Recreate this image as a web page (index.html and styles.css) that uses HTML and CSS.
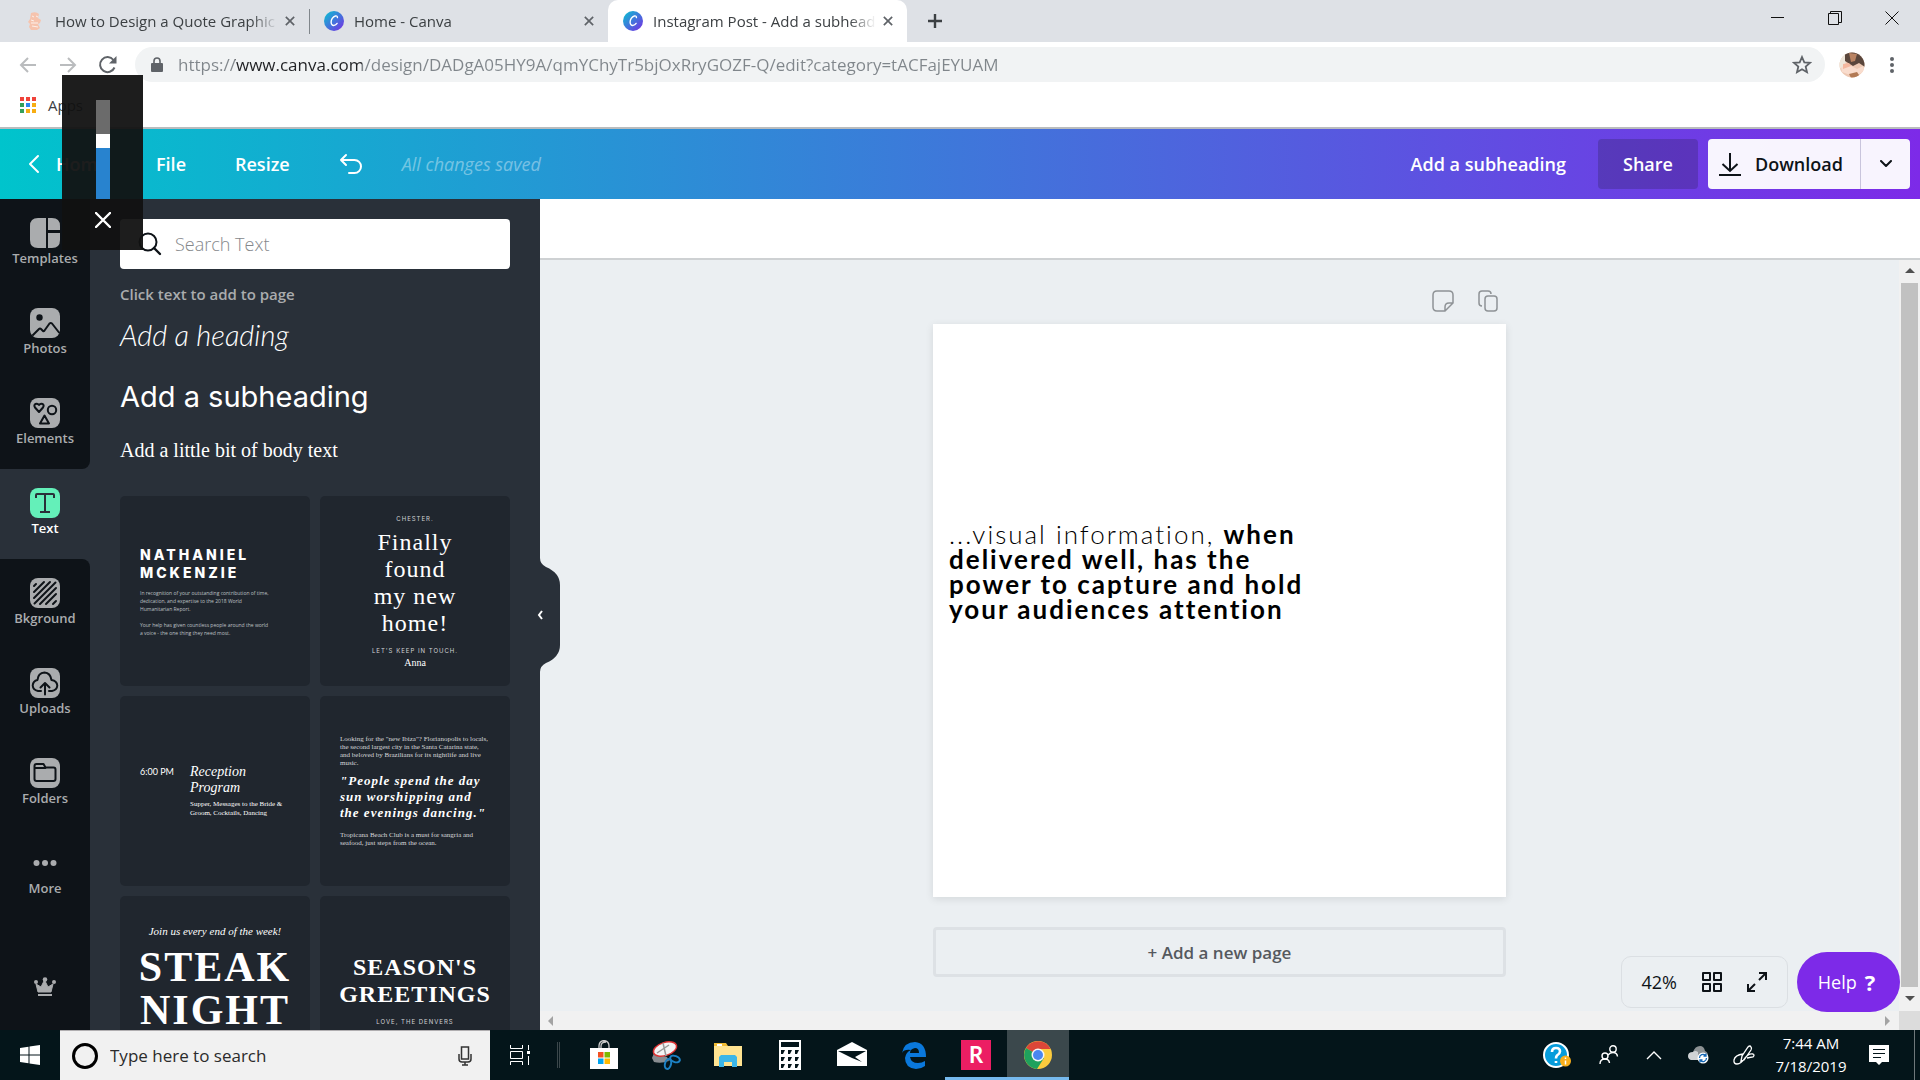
FILE: index.html
```html
<!DOCTYPE html>
<html lang="en">
<head>
    <meta charset="UTF-8">
    <meta name="viewport" content="width=device-width, initial-scale=1.0">
    <title>Instagram Post - Add a subheading</title>
    <link rel="stylesheet" href="styles.css">
</head>
<body>
    <!-- shared gradients -->
    <svg class="defs" width="0" height="0" aria-hidden="true">
        <defs>
            <linearGradient id="canvaGradient" x1="0" y1="0" x2="1" y2="1">
                <stop offset="0.1" stop-color="#12b5d3"/>
                <stop offset="0.95" stop-color="#7431e4"/>
            </linearGradient>
        </defs>
    </svg>

    <!-- Browser -->
    <div class="tabs">
        <div class="tab">
            <svg class="favicon" viewBox="0 0 20 20"><path d="M6 2q5-2 8 1l-1 4 3 2-1 3-2 1 2 4-3 2H6l-2-3 1-3-2-2 2-3z" fill="#f6c3ad"/><path d="M7 5l2 1M11 5l2 1M6 12h7M7 15l6 1M6 9l3 1" stroke="#fdf0ea" stroke-width="1"/></svg>
            <span class="tab-title">How to Design a Quote Graphic f</span>
            <button class="tab-close" aria-label="Close tab"><svg viewBox="0 0 12 12"><path d="M1 1l10 10M11 1L1 11"/></svg></button>
        </div>
        <div class="tab tab-separated">
            <svg class="favicon" viewBox="0 0 20 20"><circle cx="10" cy="10" r="10" fill="url(#canvaGradient)"/><path d="M13.4 6.6c.3-1.300-.7-1.900-2-1.600-2.600.6-4.400 3.600-4.300 6.300.1 2.200 1.300 3.400 3 3.100 1.300-.2 2.300-1 3-2" fill="none" stroke="#fff" stroke-width="1.400" stroke-linecap="round"/></svg>
            <span class="tab-title">Home - Canva</span>
            <button class="tab-close" aria-label="Close tab"><svg viewBox="0 0 12 12"><path d="M1 1l10 10M11 1L1 11"/></svg></button>
        </div>
        <div class="tab tab-active">
            <svg class="favicon" viewBox="0 0 20 20"><circle cx="10" cy="10" r="10" fill="url(#canvaGradient)"/><path d="M13.4 6.6c.3-1.300-.7-1.900-2-1.600-2.600.6-4.400 3.600-4.300 6.300.1 2.200 1.300 3.400 3 3.100 1.300-.2 2.300-1 3-2" fill="none" stroke="#fff" stroke-width="1.400" stroke-linecap="round"/></svg>
            <span class="tab-title">Instagram Post - Add a subheadin</span>
            <button class="tab-close" aria-label="Close tab"><svg viewBox="0 0 12 12"><path d="M1 1l10 10M11 1L1 11"/></svg></button>
        </div>
        <button class="new-tab" aria-label="New tab"><svg width="16" height="16" viewBox="0 0 16 16"><path d="M8 1v14M1 8h14" stroke="#3c4043" stroke-width="2.400"/></svg></button>
        <div class="window-buttons">
            <button aria-label="Minimize"><svg width="14" height="14" viewBox="0 0 14 14"><path d="M0 6.500h13"/></svg></button>
            <button aria-label="Restore"><svg width="14" height="14" viewBox="0 0 14 14"><path d="M.5 2.500h10v11H.5zM2.500 2.500v-2h11v11h-3"/></svg></button>
            <button aria-label="Close"><svg width="14" height="14" viewBox="0 0 14 14"><path d="M.5.5l13 13M13.500.5l-13 13"/></svg></button>
        </div>
    </div>

    <div class="address-row">
        <button class="nav-button" aria-label="Back"><svg viewBox="0 0 20 20"><path d="M18 10H3M10 3l-7 7 7 7" stroke="#babcbe"/></svg></button>
        <button class="nav-button" aria-label="Forward"><svg viewBox="0 0 20 20"><path d="M2 10h15M10 3l7 7-7 7" stroke="#babcbe"/></svg></button>
        <button class="nav-button" aria-label="Reload"><svg viewBox="0 0 20 20"><path d="M16.500 12.500A7.500 7.500 0 1 1 15.500 5" stroke="#5f6368"/><path d="M18.500 1v7.500H11z" fill="#5f6368"/></svg></button>
        <div class="address">
            <svg width="12" height="16" viewBox="0 0 12 16"><path d="M1 6h10q1 0 1 1v7q0 1-1 1H1q-1 0-1-1V7q0-1 1-1z" fill="#5f6368"/><path d="M3 6V4a3 3 0 0 1 6 0v2" fill="none" stroke="#5f6368" stroke-width="1.600"/></svg>
            <input class="url" type="text" aria-label="Address" value="https://www.canva.com/design/DADgA05HY9A/qmYChyTr5bjOxRryGOZF-Q/edit?category=tACFajEYUAM">
            <button aria-label="Bookmark this page"><svg width="20" height="20" viewBox="0 0 20 20"><path d="M10 2l2.300 5.300 5.700.5-4.300 3.800 1.300 5.600-5-3-5 3 1.300-5.600L2 7.800l5.700-.5z" fill="none" stroke="#5f6368" stroke-width="1.800"/></svg></button>
        </div>
        <button class="profile" aria-label="Profile"><svg width="26" height="26" viewBox="0 0 26 26"><clipPath id="face"><circle cx="13" cy="13" r="12.500"/></clipPath><g clip-path="url(#face)"><path d="M0 0h26v26H0z" fill="#eec9b4"/><path d="M0 0h9l-3 14-6 3z" fill="#eee6da"/><path d="M6 0h20v15l-6-4-6 3-8-5z" fill="#5a463c"/><path d="M10 1l8 1-2 7-4 1z" fill="#b98363"/><path d="M2 15l8-2 8 4 6-3 2 6-12 4-11-4z" fill="#f9dccd"/><path d="M10 22l8-2 4 6H12z" fill="#b27a55"/><path d="M4 12l6-1 2 3-8 3z" fill="#f4b79e"/></g></svg></button>
        <button class="menu-dots" aria-label="Menu"><svg width="6" height="18" viewBox="0 0 6 18"><g fill="#5f6368"><circle cx="3" cy="3" r="2"/><circle cx="3" cy="9" r="2"/><circle cx="3" cy="15" r="2"/></g></svg></button>
    </div>

    <div class="bookmarks">
        <a href="#" class="apps-link">
            <svg width="16" height="16" viewBox="0 0 16 16"><path d="M0 0h4v4H0zM6 0h4v4H6zM12 0h4v4h-4z" fill="#f0433a"/><path d="M0 6h4v4H0zM0 12h4v4H0z" fill="#34a05a"/><path d="M6 6h4v4H6z" fill="#2d86f0"/><path d="M12 6h4v4h-4zM6 12h4v4H6zM12 12h4v4h-4z" fill="#f7ad12"/></svg>
            Apps
        </a>
    </div>

    <!-- Editor header -->
    <header class="header">
        <a href="#" class="home-link">
            <svg width="12" height="20" viewBox="0 0 12 20"><path d="M10 2l-8 8 8 8" fill="none" stroke="#fff" stroke-width="2" stroke-linecap="round" stroke-linejoin="round"/></svg>
            Home
        </a>
        <button class="header-button">File</button>
        <button class="header-button">Resize</button>
        <button class="undo" aria-label="Undo"><svg width="24" height="22" viewBox="0 0 24 22"><path d="M7 2L2 7l5 5M2 7h13.500a6.500 6.500 0 0 1 0 13H10" fill="none" stroke="#fff" stroke-width="2" stroke-linecap="round" stroke-linejoin="round"/></svg></button>
        <span class="saved">All changes saved</span>
        <button class="header-button design-title">Add a subheading</button>
        <button class="share">Share</button>
        <div class="download-group">
            <button class="download">
                <svg width="22" height="24" viewBox="0 0 22 24"><path d="M11 1v18M3.500 12l7.500 7 7.500-7M0 23h22" fill="none" stroke="#0e1318" stroke-width="2"/></svg>
                Download
            </button>
            <button class="download-more" aria-label="Download options"><svg width="12" height="8" viewBox="0 0 12 8"><path d="M1 1l5 5 5-5" fill="none" stroke="#0e1318" stroke-width="2" stroke-linecap="round" stroke-linejoin="round"/></svg></button>
        </div>
    </header>

    <main class="editor">
        <nav class="rail">
            <div class="rail-group rail-top">
                <button class="rail-item"><svg viewBox="0 0 30 30"><path d="M16 0h-8Q0 0 0 8v14q0 8 8 8h8zM18 0h4q8 0 8 8v4H18zM18 15h12v7q0 8-8 8h-4z"/></svg>Templates</button>
                <button class="rail-item"><svg viewBox="0 0 30 30"><rect width="30" height="30" rx="8"/><circle cx="9.500" cy="9.500" r="3.200" class="ink-fill"/><path class="ink" d="M3 27l6-6q1-1 2 0l2 2q1 .5 1.500-.5l5-7q1.200-1 2.500 0l7 9"/></svg>Photos</button>
                <button class="rail-item"><svg viewBox="0 0 30 30"><rect width="30" height="30" rx="8"/><path class="ink" d="M9 14L5 9.500Q3.500 7 5.500 6q2-1 3.500 1 1.500-2 3.500-1 2 1 .5 3.500zM14.500 17.500L19 25.500H10z"/><circle class="ink" cx="22" cy="12" r="4.200"/></svg>Elements</button>
            </div>
            <div class="rail-active">
                <button class="rail-item selected"><svg viewBox="0 0 30 30"><rect width="30" height="30" rx="8"/><path d="M6 10V7q0-1 1-1h16q1 0 1 1v3M15 6v18M10 24h10" fill="none" stroke="#2a3039" stroke-width="2"/></svg>Text</button>
            </div>
            <div class="rail-group rail-bottom">
                <button class="rail-item"><svg viewBox="0 0 30 30"><rect width="30" height="30" rx="8"/><path class="ink" d="M4 8l2-2M4 14L14 4M4 20L20 4M4.500 25.500l21-21M10 26L26 10M16 26l10-10M23 26l3-3"/></svg>Bkground</button>
                <button class="rail-item"><svg viewBox="0 0 30 30"><rect width="30" height="30" rx="8"/><path class="ink" d="M11 23H8q-5-1-5.300-5.500Q3 13 7.500 12q.5-7 7-7.500 6 .5 7 7.500 5.500 1 5.800 5.500Q27 22 22 23h-3M15 26.500V16M10.500 19.500L15 15l4.500 4.500"/></svg>Uploads</button>
                <button class="rail-item"><svg viewBox="0 0 30 30"><rect width="30" height="30" rx="8"/><path class="ink" d="M4.500 21V8q0-2 2-2h7l2 3.500h8q2 0 2 2V21q0 2-2 2h-17q-2 0-2-2zM4.500 10h11"/></svg>Folders</button>
                <button class="rail-item"><svg viewBox="0 0 30 30"><circle cx="6.500" cy="15" r="3"/><circle cx="15" cy="15" r="3"/><circle cx="23.500" cy="15" r="3"/></svg>More</button>
                <button class="crown" aria-label="Canva Pro"><svg width="22" height="20" viewBox="0 0 22 20"><path d="M4 15L2 7l5 3 3.500-7L14 10l5-3-2 8z" stroke="#aaacae" stroke-width="1" stroke-linejoin="round"/><circle cx="2" cy="5" r="2"/><circle cx="11" cy="2.500" r="2.300"/><circle cx="20" cy="5" r="2"/><path d="M4 17h14v2H4z"/></svg></button>
            </div>
        </nav>

        <section class="panel">
            <div class="panel-content">
                <label class="search">
                    <svg width="24" height="24" viewBox="0 0 24 24"><circle cx="10" cy="10" r="8.500" fill="none" stroke="#0e1318" stroke-width="2"/><path d="M16 16l6 6" stroke="#0e1318" stroke-width="2.400" stroke-linecap="round"/></svg>
                    <input type="search" placeholder="Search Text" aria-label="Search Text">
                </label>
                <h2 class="hint">Click text to add to page</h2>
                <button class="add-heading">Add a heading</button>
                <button class="add-subheading">Add a subheading</button>
                <button class="add-body">Add a little bit of body text</button>

                <div class="cards">
                    <button class="card name-card">
                        <span class="name">NATHANIEL<br>MCKENZIE</span>
                        <span class="tiny">In recognition of your outstanding contribution of time,<br>dedication, and expertise to the 2018 World<br>Humanitarian Report.<br><br>Your help has given countless people around the world<br>a voice - the one thing they need most.</span>
                    </button>
                    <button class="card home-card">
                        <span class="caps">CHESTER.</span>
                        <span class="slab">Finally<br>found<br>my new<br>home!</span>
                        <span class="caps">LET'S KEEP IN TOUCH.</span>
                        <span class="sign">Anna</span>
                    </button>
                    <button class="card program-card">
                        <span class="time">6:00 PM</span>
                        <span class="program">
                            <span class="program-title">Reception Program</span>
                            <span class="program-text">Supper, Messages to the Bride &amp; Groom, Cocktails, Dancing</span>
                        </span>
                    </button>
                    <button class="card quote-card">
                        <span class="story">Looking for the "new Ibiza"? Florianopolis to locals,<br>the second largest city in the Santa Catarina state,<br>and beloved by Brazilians for its nightlife and live<br>music.</span>
                        <span class="quote">"People spend the day<br>sun worshipping and<br>the evenings dancing."</span>
                        <span class="story">Tropicana Beach Club is a must for sangria and<br>seafood, just steps from the ocean.</span>
                    </button>
                    <button class="card steak-card">
                        <span class="invite">Join us every end of the week!</span>
                        <span class="steak">STEAK<br>NIGHT</span>
                    </button>
                    <button class="card season-card">
                        <span class="season">SEASON'S<br>GREETINGS</span>
                        <span class="caps">LOVE, THE DENVERS</span>
                    </button>
                </div>
            </div>
            <button class="collapse" aria-label="Hide panel">
                <svg width="30" height="114" viewBox="0 0 30 114"><path d="M0 0h10q0 6 6 9 14 6 14 18v60q0 12-14 18-6 3-6 9H0z" fill="#293039"/><path d="M12 53l-3 4 3 4" fill="none" stroke="#fff" stroke-width="2"/></svg>
            </button>
        </section>

        <section class="workspace">
            <div class="context-bar"></div>
            <div class="scroll-area">
                <div class="stage">
                    <div class="page-column">
                        <div class="page-tools">
                            <button aria-label="Add note"><svg width="22" height="22" viewBox="0 0 22 22"><path d="M5 1h12q4 0 4 4v8l-8 8H5q-4 0-4-4V5q0-4 4-4zM13 21v-4q0-4 4-4h4"/></svg></button>
                            <button aria-label="Copy page"><svg width="20" height="22" viewBox="0 0 20 22"><path d="M4 16q-3 0-3-3V4q0-3 3-3h6q3 0 3 3"/><rect x="7" y="6" width="12" height="15" rx="3"/></svg></button>
                        </div>
                        <div class="design">
                            <p class="design-text">...visual information, <b>when<br>delivered well, has the<br>power to capture and hold<br>your audiences attention</b></p>
                        </div>
                        <button class="add-page">+ Add a new page</button>
                    </div>
                    <div class="floating">
                        <div class="zoom-box">
                            <button>42%</button>
                            <button aria-label="Grid view"><svg width="20" height="20" viewBox="0 0 20 20"><path d="M1 1h7v7H1zM12 1h7v7h-7zM1 12h7v7H1zM12 12h7v7h-7z" fill="none" stroke="#0e1318" stroke-width="2" stroke-linejoin="round"/></svg></button>
                            <button aria-label="Full screen"><svg width="20" height="20" viewBox="0 0 20 20"><path d="M12 1h7v7M19 1l-7 7M8 19H1v-7M1 19l7-7" fill="none" stroke="#0e1318" stroke-width="2"/></svg></button>
                        </div>
                        <button class="help">Help <b>?</b></button>
                    </div>
                </div>
                <div class="scroll-y">
                    <svg width="10" height="6" viewBox="0 0 10 6"><path d="M0 5l5-5 5 5z" fill="#505050"/></svg>
                    <div class="scroll-thumb"></div>
                    <svg width="10" height="6" viewBox="0 0 10 6"><path d="M0 0l5 5 5-5z" fill="#505050"/></svg>
                </div>
                <div class="scroll-x">
                    <svg width="6" height="10" viewBox="0 0 6 10"><path d="M5 0L0 5l5 5z" fill="#a3a3a3"/></svg>
                    <svg width="6" height="10" viewBox="0 0 6 10"><path d="M0 0l5 5-5 5z" fill="#a3a3a3"/></svg>
                </div>
                <div class="scroll-corner"></div>
            </div>
        </section>
    </main>

    <!-- Taskbar -->
    <footer class="taskbar">
        <button class="start" aria-label="Start"><svg width="20" height="20" viewBox="0 0 20 20"><path d="M0 3l8.500-1.200v7.700H0zM9.500 1.600L20 0v9.500H9.500zM0 10.500h8.500v7.700L0 17zM9.500 10.500H20V20L9.500 18.400z" fill="#fff"/></svg></button>
        <label class="task-search">
            <svg width="28" height="28" viewBox="0 0 28 28"><circle cx="14" cy="14" r="11.500" fill="none" stroke="#000" stroke-width="3"/></svg>
            <input type="text" placeholder="Type here to search" aria-label="Type here to search">
            <svg width="14" height="20" viewBox="0 0 14 20" fill="none" stroke="#333" stroke-width="1.500"><rect x="3.500" y="1" width="7" height="12"/><path d="M1 8v5q0 3 3 3h6q3 0 3-3V8M7 16v3M4 19h6"/></svg>
        </label>
        <button class="task-view" aria-label="Task view"><svg width="21" height="20" viewBox="0 0 21 20" fill="none" stroke="#fff"><path d="M.5 0v3.500h12V0M.5 20v-3.500h12V20M.5 6.500h12v7H.5zM18.500 0v5M18.500 11v9"/><path d="M17 6h3v3h-3z" fill="#fff" stroke="none"/></svg></button>
        <div class="task-separator"></div>
        <div class="task-apps">
            <button aria-label="Store"><svg viewBox="0 0 30 30"><path d="M10 11V6q0-5 5-5.500Q20 1 20 6v5M12 11V6q0-4 5-4" fill="none" stroke="#ccc" stroke-width="1.300"/><path d="M1 8h28v21H1z" fill="#fff"/><path d="M9 12h5.500v5.500H9z" fill="#f25022"/><path d="M15.500 12H21v5.500h-5.500z" fill="#7fba00"/><path d="M9 18.500h5.500V24H9z" fill="#00a4ef"/><path d="M15.500 18.500H21V24h-5.500z" fill="#ffb900"/></svg></button>
            <button aria-label="Snipping Tool"><svg viewBox="0 0 30 30"><path d="M1 18l2-5 13 4 2 4q-8 3-15 1z" fill="#888c90"/><ellipse cx="14" cy="9" rx="12" ry="6.500" transform="rotate(-18 14 9)" fill="#f4f4f4" stroke="#d33" stroke-width="1.400"/><path d="M12 3l3 13M6 13l12-8" stroke="#9a9a9a" stroke-width="1.500"/><ellipse cx="17" cy="24" rx="3" ry="5" transform="rotate(15 17 24)" fill="none" stroke="#1c81c4" stroke-width="2"/><ellipse cx="24" cy="19" rx="5" ry="3" transform="rotate(20 24 19)" fill="none" stroke="#1c81c4" stroke-width="2"/></svg></button>
            <button aria-label="File Explorer"><svg viewBox="0 0 30 30"><path d="M1 3h12l2 3H1z" fill="#f0bb35"/><path d="M1 6h28v20H1z" fill="#ffe391"/><path d="M4 4h5v2H4z" fill="#fff"/><path d="M6 27V17l2-2h14l2 2v10h-5v-5h-8v5z" fill="#3cb6e8"/></svg></button>
            <button aria-label="Calculator"><svg viewBox="0 0 30 30"><path d="M4 0h22v30H4zM6 2v5h18V2z" fill="#fff" fill-rule="evenodd"/><path d="M6 10h4l-2 4H6zM13 10h4l-2 4h-2zM20 10h4l-2 4h-2zM6 17h4l-2 4H6zM13 17h4l-2 4h-2zM20 17h4l-2 4h-2zM6 24h4l-2 4H6zM13 24h4l-2 4h-2zM20 24h4l-2 4h-2z" fill="#04151a"/></svg></button>
            <button aria-label="Mail"><svg viewBox="0 0 30 30"><path d="M0 10L15 2l15 8v16H0z" fill="#fff"/><path d="M1 11h28l-11 6 7 5-10-4z" fill="#04151a"/></svg></button>
            <button aria-label="Edge"><svg viewBox="0 0 30 30"><path d="M3 13Q5 2 16 2q11 1 11 15H11q1 6 8 6 4 0 7-2v5q-4 3-9 3Q6 28 6 18q1-6 6-8-7-1-9 3zM11 13h9q0-5-4-5-5 1-5 5z" fill="#0a78dc"/></svg></button>
            <button class="running" aria-label="R"><span class="r-logo">R</span></button>
            <button class="running current" aria-label="Chrome"><svg viewBox="0 0 30 30"><circle cx="15" cy="15" r="14" fill="#fbcb3e"/><path d="M15 15L3 8A14 14 0 0 1 27.500 9H15z" fill="#dc4638"/><path d="M3 8A14 14 0 0 0 14 29l7-11-6-3z" fill="#1fa15d"/><circle cx="15" cy="15" r="6.500" fill="#f5f5f5"/><circle cx="15" cy="15" r="5" fill="#4a86f0"/></svg></button>
        </div>
        <div class="tray">
            <button aria-label="Help"><svg width="30" height="28" viewBox="0 0 30 28"><circle cx="14" cy="14" r="12" fill="#079cdb" stroke="#fff" stroke-width="2"/><path d="M10 11q0-4 4-4 4 0 4 3.500 0 2-3 4-1 1-1 3M14 20v2" fill="none" stroke="#fff" stroke-width="2.600"/><circle cx="23.500" cy="20" r="5.500" fill="#f9ae1a"/><path d="M23.500 16.500v1.500M23.500 19.500v4" stroke="#fff" stroke-width="1.500"/></svg></button>
            <button aria-label="People"><svg width="20" height="20" viewBox="0 0 20 20" fill="none" stroke="#fff" stroke-width="1.400"><circle cx="6" cy="11" r="3"/><circle cx="14" cy="4" r="3.200"/><path d="M1 19q0-5 5-5 4 0 4.500 4M9 10q2-2.500 5-2.500 4 0 4.500 4"/></svg></button>
            <button aria-label="Show hidden icons"><svg width="16" height="10" viewBox="0 0 16 10"><path d="M1 9l7-7 7 7" fill="none" stroke="#fff" stroke-width="1.400"/></svg></button>
            <button aria-label="OneDrive"><svg width="22" height="18" viewBox="0 0 22 18"><path d="M5 6q2-6 7-6 4 0 5 5 3 1 3 5H3z" fill="#8d9294"/><path d="M3 14Q0 13 0 10q0-4 5-4 2-2 5 0v8z" fill="#d0d3d5"/><circle cx="15" cy="12" r="5.500" fill="#fff"/><path d="M11.500 12a3.500 3.500 0 0 1 6-2.500M18.500 12a3.500 3.500 0 0 1-6 2.500M18 7.500v2.500h-2.500M12 16.500V14h2.500" fill="none" stroke="#1668b5" stroke-width="1.300"/></svg></button>
            <button aria-label="Windows Ink"><svg width="22" height="20" viewBox="0 0 22 20" fill="none" stroke="#fff" stroke-width="1.300"><path d="M8 16l1-5 6-9q2-2 3 0 1 1 0 3l-7 10zM10 9q-8 1-9 6-.5 4 3 4 4 0 8-6 4-5 8-4 2 1 0 3l-6 1"/></svg></button>
            <div class="clock"><span>7:44 AM</span><span>7/18/2019</span></div>
            <button aria-label="Notifications"><svg width="20" height="20" viewBox="0 0 20 20"><path d="M0 0h20v17h-7l-3 3-3-3H0z" fill="#fff"/><path d="M4 4.500h12M4 8.500h12M4 12.500h8" stroke="#04151a" stroke-width="1.200"/></svg></button>
        </div>
        <button class="show-desktop" aria-label="Show desktop"></button>
    </footer>

    <!-- volume flyout, floats over everything -->
    <div class="volume">
        <div class="volume-track"><div class="volume-thumb"></div><div class="volume-level"></div></div>
        <button aria-label="Mute"><svg width="16" height="16" viewBox="0 0 16 16"><path d="M1 1l14 14M15 1L1 15" stroke="#fff" stroke-width="2.400" stroke-linecap="round"/></svg></button>
    </div>
</body>
</html>
```
FILE: styles.css
```css
* {
    box-sizing: border-box;
}
body {
    position: relative;
    display: flex;
    flex-direction: column;
    height: 100vh;
    margin: 0;
    overflow: hidden;
    font-family: "Open Sans", sans-serif;
    background-color: #fff;
}
button, input {
    font-family: inherit;
    border: 0;
    margin: 0;
    padding: 0;
    background: none;
    outline: none;
}
button {
    display: flex;
    align-items: center;
    justify-content: center;
}
a {
    text-decoration: none;
}
svg {
    display: block;
    flex: none;
}
.defs {
    position: absolute;
}

/* browser tabs */
.tabs {
    display: flex;
    flex: none;
    height: 42px;
    background-color: #dee1e6;
}
.tab {
    display: flex;
    align-items: center;
    width: 299px;
    padding: 0 7px 0 15px;
    color: #3c4043;
    font-size: 15px;
}
.tab:first-child {
    width: 309px;
    padding-left: 25px;
}
.tab-separated {
    background: linear-gradient(#80868b, #80868b) 0 9px / 1px 25px no-repeat;
}
.tab-active {
    background-color: #fff;
    border-radius: 10px 10px 0 0;
}
.favicon {
    width: 20px;
    height: 20px;
    margin-right: 10px;
}
.tab-title {
    flex: 1;
    min-width: 0;
    overflow: hidden;
    white-space: nowrap;
    -webkit-mask-image: linear-gradient(90deg, #000 88%, transparent);
    mask-image: linear-gradient(90deg, #000 88%, transparent);
}
.tab-close {
    width: 24px;
    height: 24px;
}
.tab-close svg {
    width: 10px;
    height: 10px;
    stroke: #5f6368;
    stroke-width: 2;
}
.new-tab {
    width: 56px;
}
.window-buttons {
    display: flex;
    margin-left: auto;
}
.window-buttons button {
    width: 57px;
    height: 36px;
}
.window-buttons svg {
    fill: none;
    stroke: #111;
}

/* address bar */
.address-row {
    display: flex;
    align-items: center;
    flex: none;
    height: 45px;
    padding: 0 20px 0 8px;
}
.nav-button {
    width: 40px;
}
.nav-button svg {
    width: 20px;
    height: 20px;
    fill: none;
    stroke-width: 2;
}
.address {
    display: flex;
    align-items: center;
    flex: 1;
    height: 35px;
    margin: 0 14px 0 7px;
    padding: 0 13px 0 16px;
    border-radius: 18px;
    background-color: #f1f3f4;
}
.url {
    flex: 1;
    height: 30px;
    margin-left: 15px;
    font-size: 17px;
    color: transparent;
    /* host part of the address is darker than the rest */
    background: linear-gradient(90deg, #80868b 57px, #202124 57px 184px, #80868b 184px);
    -webkit-background-clip: text;
    background-clip: text;
}
.menu-dots {
    width: 16px;
    margin-left: 19px;
}
.bookmarks {
    flex: none;
    height: 42px;
    padding: 7px 20px;
    border-bottom: 2px solid #b9bcbe;
}
.apps-link {
    display: flex;
    align-items: center;
    gap: 12px;
    color: #3c4043;
    font-size: 15px;
    line-height: 22px;
}

/* editor header */
.header {
    display: flex;
    align-items: center;
    flex: none;
    height: 70px;
    padding: 0 10px 0 28px;
    background: linear-gradient(90deg, #00c4cc, #7d2ae8);
    color: #fff;
    font-size: 18px;
    font-weight: 600;
}
.header button {
    font-size: 18px;
    font-weight: 600;
}
.home-link {
    display: flex;
    align-items: center;
    gap: 16px;
    width: 128px;
    color: #fff;
}
.header-button {
    margin-right: 49px;
    color: #fff;
}
.undo {
    margin-right: 39px;
}
.saved {
    color: rgba(255, 255, 255, 0.4);
    font-weight: 400;
    font-style: italic;
}
.design-title {
    margin: 0 32px 0 auto;
}
.share {
    width: 100px;
    height: 50px;
    border-radius: 4px;
    background-color: rgba(14, 19, 24, 0.2);
    color: #fff;
}
.download-group {
    display: flex;
    width: 202px;
    height: 50px;
    margin-left: 10px;
    border-radius: 4px;
    background-color: rgba(255, 255, 255, 0.95);
}
.download {
    flex: 1;
    gap: 14px;
    padding-right: 6px;
    color: #0e1318;
}
.download-more {
    width: 50px;
    border-left: 1px solid #c9c4dc;
}

/* left rail */
.editor {
    display: flex;
    flex: 1;
    min-height: 0;
}
.rail {
    display: flex;
    flex-direction: column;
    width: 90px;
    background-color: #293039;
}
.rail-group {
    background-color: #0e1318;
}
.rail-top {
    border-bottom-right-radius: 8px;
}
.rail-bottom {
    display: flex;
    flex-direction: column;
    flex: 1;
    min-height: 0;
    border-top-right-radius: 8px;
}
.rail-item {
    flex-direction: column;
    justify-content: flex-start;
    flex: none;
    width: 90px;
    height: 90px;
    padding-top: 19px;
    color: #aaacae;
    font-size: 13px;
    font-weight: 600;
    line-height: 20px;
}
.rail-item svg {
    width: 30px;
    height: 30px;
    fill: #aaacae;
}
.rail-item .ink {
    fill: none;
    stroke: #0e1318;
    stroke-width: 2;
    stroke-linecap: round;
    stroke-linejoin: round;
}
.rail-item .ink-fill {
    fill: #0e1318;
}
.selected {
    color: #fff;
}
.selected svg {
    fill: #64f0b9;
}
.crown {
    margin: auto auto 33px;
    fill: #aaacae;
}

/* text panel */
.panel {
    position: relative;
    flex: none;
    width: 450px;
    background-color: #293039;
}
.panel-content {
    height: 100%;
    padding: 20px 30px 0;
    overflow: hidden;
}
.search {
    display: flex;
    align-items: center;
    gap: 13px;
    height: 50px;
    padding: 0 18px;
    border-radius: 4px;
    background-color: #fff;
}
.search input {
    flex: 1;
    min-width: 0;
    font-size: 18px;
    font-weight: 300;
}
.search input::placeholder {
    color: #85888b;
}
.hint {
    margin: 13px 0 0;
    color: #aaacae;
    font-size: 15px;
    font-weight: 600;
    line-height: 24px;
}
.add-heading {
    height: 56px;
    color: #fff;
    font-family: Lato, sans-serif;
    font-size: 29px;
    font-style: italic;
    font-weight: 300;
}
.add-subheading {
    height: 68px;
    color: #fff;
    font-family: Inter, sans-serif;
    font-size: 29px;
    font-weight: 400;
}
.add-body {
    height: 40px;
    margin-bottom: 26px;
    color: #fff;
    font-family: "Liberation Serif", serif;
    font-size: 20px;
}
.cards {
    display: grid;
    grid-template-columns: repeat(2, minmax(0, 1fr));
    gap: 10px;
}
.card {
    flex-direction: column;
    height: 190px;
    padding: 0 20px;
    border-radius: 5px;
    background-color: #20262e;
    color: #fff;
}
.name-card {
    align-items: flex-start;
    text-align: left;
    white-space: nowrap;
}
.name {
    margin-bottom: 7px;
    font-family: Inter, sans-serif;
    font-size: 14px;
    font-weight: 800;
    letter-spacing: 3px;
    line-height: 18px;
}
.tiny {
    color: #bfc1c4;
    font-size: 5px;
    line-height: 8px;
}
.caps {
    color: #d0d2d4;
    font-family: Inter, sans-serif;
    font-size: 6px;
    letter-spacing: 1px;
    line-height: 12px;
}
.slab {
    margin: 4px 0 8px;
    font-family: "Liberation Serif", serif;
    font-size: 24px;
    letter-spacing: 1px;
    line-height: 27px;
}
.sign {
    font-family: "Liberation Serif", serif;
    font-size: 10px;
    line-height: 12px;
}
.program-card {
    flex-direction: row;
    align-items: flex-start;
    justify-content: flex-start;
    padding-top: 68px;
    text-align: left;
}
.time {
    width: 50px;
    font-family: Lato, sans-serif;
    font-size: 9px;
    line-height: 16px;
}
.program {
    flex: 1;
    font-family: "Liberation Serif", serif;
}
.program-title {
    display: block;
    width: 80px;
    font-size: 14px;
    font-style: italic;
    line-height: 16px;
}
.program-text {
    display: block;
    margin-top: 4px;
    font-size: 7px;
    line-height: 9px;
}
.quote-card {
    align-items: flex-start;
    font-family: "Liberation Serif", serif;
    text-align: left;
    white-space: nowrap;
}
.story {
    color: #d8d9db;
    font-size: 7px;
    line-height: 8px;
}
.quote {
    margin: 6px 0 10px;
    font-size: 13px;
    font-style: italic;
    font-weight: 700;
    letter-spacing: 1px;
    line-height: 16px;
}
.steak-card {
    justify-content: flex-start;
    padding-top: 28px;
    font-family: "Liberation Serif", serif;
}
.invite {
    font-size: 11px;
    font-style: italic;
    line-height: 14px;
}
.steak {
    margin-top: 8px;
    font-size: 42px;
    font-weight: 700;
    letter-spacing: 2px;
    line-height: 43px;
}
.season {
    font-family: "Liberation Serif", serif;
    font-size: 24px;
    font-weight: 700;
    letter-spacing: 1px;
    line-height: 27px;
}
.season-card .caps {
    margin-top: 8px;
}
.collapse {
    position: absolute;
    z-index: 1;
    top: 50%;
    right: -20px;
    transform: translateY(-50%);
}

/* canvas */
.workspace {
    display: flex;
    flex-direction: column;
    flex: 1;
    min-width: 0;
}
.context-bar {
    flex: none;
    height: 61px;
    border-bottom: 2px solid #ced1d3;
    background-color: #fff;
}
.scroll-area {
    display: grid;
    flex: 1;
    grid-template-columns: 1fr 21px;
    grid-template-rows: 1fr 19px;
    min-height: 0;
}
.stage {
    position: relative;
    display: flex;
    justify-content: center;
    min-height: 0;
    background-color: #ebeff2;
}
.page-column {
    width: 573px;
}
.page-tools {
    display: flex;
    justify-content: flex-end;
    gap: 24px;
    padding: 30px 8px 12px;
}
.page-tools svg {
    fill: none;
    stroke: #8f9396;
    stroke-width: 1.5;
}
.design {
    aspect-ratio: 1;
    padding: 198px 16px 0;
    background-color: #fff;
    box-shadow: 0 2px 8px rgba(14, 19, 24, 0.1);
}
.design-text {
    margin: 0;
    color: #000;
    font-family: Lato, sans-serif;
    font-size: 26px;
    font-weight: 300;
    letter-spacing: 2px;
    line-height: 25px;
}
.design-text b {
    font-weight: 700;
}
.add-page {
    width: 100%;
    height: 50px;
    margin-top: 30px;
    border: 3px solid #dde1e5;
    border-radius: 4px;
    color: #55595e;
    font-size: 17px;
    font-weight: 600;
}
.floating {
    position: absolute;
    z-index: 1;
    right: -1px;
    bottom: -1px;
    display: flex;
    align-items: center;
    gap: 9px;
}
.zoom-box {
    display: flex;
    align-items: center;
    gap: 25px;
    height: 52px;
    padding: 0 20px;
    border: 1px solid #dbdfe3;
    border-radius: 10px;
}
.zoom-box button {
    color: #0e1318;
    font-size: 18px;
}
.help {
    gap: 8px;
    width: 103px;
    height: 60px;
    padding-right: 4px;
    border-radius: 30px;
    background-color: #7d2ae8;
    color: #fff;
    font-size: 18px;
    font-weight: 400;
}
.help b {
    font-size: 22px;
}
.scroll-y {
    display: flex;
    flex-direction: column;
    align-items: center;
    gap: 9px;
    padding: 8px 0 9px;
    background-color: #f1f1f1;
}
.scroll-thumb {
    flex: 1;
    width: 17px;
    background-color: #c1c1c1;
}
.scroll-x {
    display: flex;
    align-items: center;
    justify-content: space-between;
    padding: 0 8px;
    background-color: #f1f1f1;
}
.scroll-corner {
    background-color: #dcdcdc;
}

/* taskbar */
.taskbar {
    display: flex;
    flex: none;
    height: 50px;
    background-color: #04151a;
}
.start {
    width: 60px;
}
.task-search {
    display: flex;
    align-items: center;
    width: 430px;
    padding: 0 18px 0 11px;
    border-top: 1px solid #b0aeb0;
    background-color: #f1f1f1;
}
.task-search input {
    flex: 1;
    min-width: 0;
    margin-left: 11px;
    font-size: 17px;
}
.task-search input::placeholder {
    color: #2b2b2b;
}
.task-view {
    width: 60px;
}
.task-separator {
    width: 3px;
    height: 26px;
    margin: 12px 13px 0 7px;
    border: 1px solid #3b474b;
    border-width: 0 1px;
}
.task-apps {
    display: flex;
}
.task-apps button {
    width: 62px;
    border-bottom: 3px solid transparent;
    border-top: 3px solid transparent;
}
.task-apps svg {
    width: 30px;
    height: 30px;
}
.task-apps .running {
    border-bottom-color: #76b9ed;
}
.task-apps .current {
    border-top-color: #3b484c;
    background-color: #3b484c;
}
.r-logo {
    width: 30px;
    height: 30px;
    background-color: #ec1e63;
    color: #fff;
    font-family: Lato, sans-serif;
    font-size: 22px;
    font-weight: 700;
    line-height: 30px;
}
.tray {
    display: flex;
    align-items: center;
    margin-left: auto;
}
.tray button {
    width: 45px;
    height: 50px;
}
.tray button:first-child {
    width: 58px;
}
.clock {
    display: flex;
    flex-direction: column;
    width: 90px;
    color: #fff;
    font-size: 15px;
    line-height: 23px;
    text-align: center;
}
.show-desktop {
    width: 6px;
    margin-left: 13px;
    border-left: 1px solid #6f787b;
}

/* volume flyout */
.volume {
    position: absolute;
    z-index: 5;
    top: 75px;
    left: 62px;
    display: flex;
    flex-direction: column;
    align-items: center;
    width: 81px;
    height: 175px;
    padding-top: 25px;
    background-color: rgba(17, 17, 17, 0.95);
}
.volume-track {
    display: flex;
    flex-direction: column;
    width: 14px;
    height: 99px;
    padding-top: 34px;
    background-color: #6b6b6b;
}
.volume-thumb {
    height: 14px;
    background-color: #fff;
}
.volume-level {
    flex: 1;
    background-color: #2883cf;
}
.volume button {
    margin-top: 13px;
}
```
